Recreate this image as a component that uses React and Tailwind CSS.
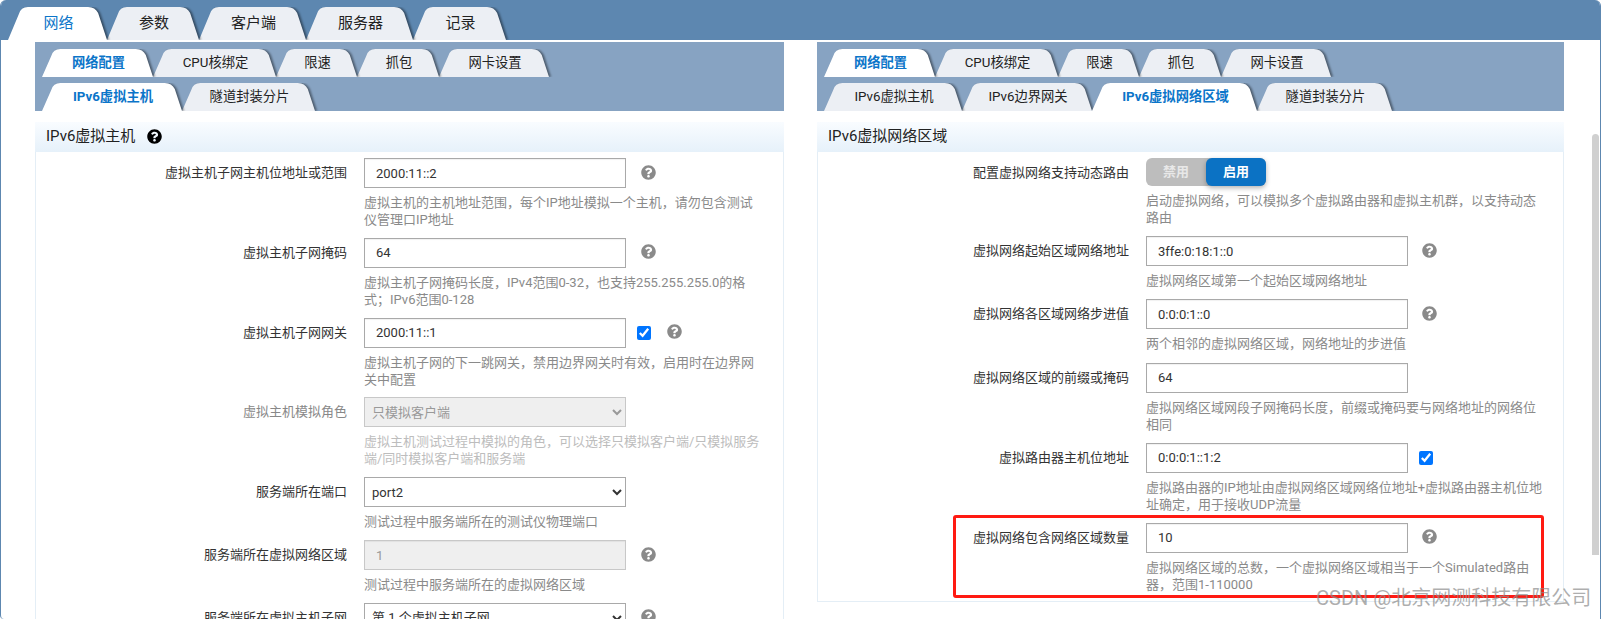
import React from "react";
import { FaQuestionCircle } from "react-icons/fa";

const zOrder = ["z-[7]", "z-[6]", "z-[5]", "z-[4]", "z-[3]", "z-[2]"];

const mainTabs = [
  { text: "网络", w: 103, active: true },
  { text: "参数", w: 96 },
  { text: "客户端", w: 111 },
  { text: "服务器", w: 111 },
  { text: "记录", w: 97 },
];

const subTabs = [
  { text: "网络配置", w: 115, active: true },
  { text: "CPU核绑定", w: 127 },
  { text: "限速", w: 85 },
  { text: "抓包", w: 86 },
  { text: "网卡设置", w: 114 },
];

const leftTabs = [
  { text: "IPv6虚拟主机", w: 144, active: true },
  { text: "隧道封装分片", w: 137 },
];

const rightTabs = [
  { text: "IPv6虚拟主机", w: 142 },
  { text: "IPv6边界网关", w: 134 },
  { text: "IPv6虚拟网络区域", w: 169, active: true },
  { text: "隧道封装分片", w: 139 },
];

const Tab = ({ text, w, h, active, index, big }) => {
  const d = `M0 ${h} L${h * 0.33} 7 Q${h * 0.33 + 2} 0 ${h * 0.33 + 9} 0 L${w - h * 0.33 - 12} 0 Q${w - h * 0.33 - 5} 0 ${w - h * 0.33 - 2} 6 L${w - 4} ${h} Z`;
  return (
    <div
      className={`relative flex shrink-0 items-center justify-center -mr-[4px] ${active ? "z-10" : zOrder[index]}`}
      style={{ width: w, height: h }}
    >
      <svg width={w} height={h} className="absolute inset-0 overflow-visible drop-shadow-[2px_0_1px_rgba(0,0,0,0.45)]">
        <path d={d} fill={active ? "#ffffff" : "#eceff4"} />
      </svg>
      <span
        className={`relative pr-[2px] ${big ? "text-[15px]" : "text-[13.3px]"} ${active ? "text-[#0b75c9]" : "text-[#222]"} ${active && !big ? "font-bold" : ""}`}
      >
        {text}
      </span>
    </div>
  );
};

const TabRow = ({ tabs, h = 28, big }) => (
  <div className="flex overflow-hidden" style={{ height: h }}>
    {tabs.map((t, i) => (
      <Tab key={t.text} {...t} h={h} big={big} index={i} />
    ))}
  </div>
);

const Help = ({ className = "" }) => <FaQuestionCircle size={15} className={`relative -top-px shrink-0 text-[#8a8a8a] ${className}`} />;

const Field = ({ value, disabled }) => (
  <input
    readOnly
    value={value}
    disabled={disabled}
    className={`h-[30px] w-[262px] shrink-0 border pl-[11px] text-[13px] outline-none shadow-[inset_0_1px_1px_rgba(0,0,0,0.06)] ${
      disabled ? "border-[#c8c8c8] bg-[#efefef] text-[#999]" : "border-[#a9a9a9] bg-white text-[#333]"
    }`}
  />
);

const Picker = ({ value, disabled }) => (
  <select
    disabled={disabled}
    defaultValue={value}
    className={`h-[30px] w-[262px] shrink-0 border pl-[3px] text-[13px] outline-none ${
      disabled ? "border-[#c8c8c8] bg-[#efefef] text-[#999]" : "border-[#a9a9a9] bg-white text-[#333]"
    }`}
  >
    <option>{value}</option>
  </select>
);

const Check = () => <input type="checkbox" defaultChecked className="ml-[11px] h-[14px] w-[14px] shrink-0" />;

const Row = ({ label, dim, children, help, faded }) => (
  <div className="flex">
    <div className={`w-[311px] shrink-0 pt-[6px] text-right text-[13px] leading-[18px] ${dim ? "text-[#888]" : "text-[#333]"}`}>{label}</div>
    <div className="ml-[17px] min-w-0">
      <div className="flex items-center">{children}</div>
      <div className={`mt-[6px] w-[400px] text-[13px] leading-[17px] ${faded ? "text-[#bdbdbd]" : "text-[#8a8a8a]"}`}>{help}</div>
    </div>
  </div>
);

const Toggle = () => (
  <div className="flex h-[28px] w-[120px] rounded-md bg-[#bdbdbd] text-[13px] font-bold">
    <div className="flex w-[60px] items-center justify-center text-[#e8e8e8]">禁用</div>
    <div className="flex w-[60px] items-center justify-center rounded-md bg-[#0b72c4] text-white shadow-[0_2px_5px_rgba(0,0,0,0.3)]">启用</div>
  </div>
);

const Card = ({ title, icon, bodyClass, children }) => (
  <div className="mt-[11px] border-x border-b border-[#e4eef6]">
    <div className="-mx-px flex h-[30px] items-center bg-gradient-to-b from-[#f9fcff] to-[#e6f1fa] pb-[2px] pl-[11px] text-[15px] text-[#222]">
      {title}
      {icon && <FaQuestionCircle size={15} className="ml-[12px] text-black" />}
    </div>
    <div className={`flex flex-col pt-[6px] ${bodyClass}`}>{children}</div>
  </div>
);

export default function App() {
  return (
    <div className="relative h-[619px] w-full overflow-hidden rounded-t-md rounded-bl-[4px] border-x border-[#5d87b0] bg-white font-[Roboto,'Noto_Sans_CJK_SC',sans-serif]">
      <div className="h-[40px] bg-[#5d87b0] pt-[7px] pl-[7px]">
        <TabRow tabs={mainTabs} h={33} big />
      </div>

      <div className="mt-[2px] flex gap-[33px] pl-[34px]">
        <div className="w-[749px] shrink-0">
          <div className="flex h-[69px] flex-col gap-[6px] bg-[#87a3c2] pt-[7px] pl-[7px]">
            <TabRow tabs={subTabs} />
            <TabRow tabs={leftTabs} />
          </div>
          <Card title="IPv6虚拟主机" icon bodyClass="gap-[9.83px]">
            <Row label="虚拟主机子网主机位地址或范围" help="虚拟主机的主机地址范围，每个IP地址模拟一个主机，请勿包含测试仪管理口IP地址">
              <Field value="2000:11::2" />
              <Help className="ml-[15px]" />
            </Row>
            <Row label="虚拟主机子网掩码" help="虚拟主机子网掩码长度，IPv4范围0-32，也支持255.255.255.0的格式；IPv6范围0-128">
              <Field value="64" />
              <Help className="ml-[15px]" />
            </Row>
            <Row label="虚拟主机子网网关" help="虚拟主机子网的下一跳网关，禁用边界网关时有效，启用时在边界网关中配置">
              <Field value="2000:11::1" />
              <Check />
              <Help className="ml-[16px]" />
            </Row>
            <Row label="虚拟主机模拟角色" dim faded help="虚拟主机测试过程中模拟的角色，可以选择只模拟客户端/只模拟服务端/同时模拟客户端和服务端">
              <Picker value="只模拟客户端" disabled />
            </Row>
            <Row label="服务端所在端口" help="测试过程中服务端所在的测试仪物理端口">
              <Picker value="port2" />
            </Row>
            <Row label="服务端所在虚拟网络区域" help="测试过程中服务端所在的虚拟网络区域">
              <Field value="1" disabled />
              <Help className="ml-[15px]" />
            </Row>
            <Row label="服务端所在虚拟主机子网" help="">
              <Picker value="第 1 个虚拟主机子网" />
              <Help className="ml-[15px]" />
            </Row>
          </Card>
        </div>

        <div className="w-[747px] shrink-0">
          <div className="flex h-[69px] flex-col gap-[6px] bg-[#87a3c2] pt-[7px] pl-[7px]">
            <TabRow tabs={subTabs} />
            <TabRow tabs={rightTabs} />
          </div>
          <Card title="IPv6虚拟网络区域" bodyClass="gap-[10.2px] pb-[8px]">
            <Row label="配置虚拟网络支持动态路由" help="启动虚拟网络，可以模拟多个虚拟路由器和虚拟主机群，以支持动态路由">
              <Toggle />
            </Row>
            <Row label="虚拟网络起始区域网络地址" help="虚拟网络区域第一个起始区域网络地址">
              <Field value="3ffe:0:18:1::0" />
              <Help className="ml-[14px]" />
            </Row>
            <Row label="虚拟网络各区域网络步进值" help="两个相邻的虚拟网络区域，网络地址的步进值">
              <Field value="0:0:0:1::0" />
              <Help className="ml-[14px]" />
            </Row>
            <Row label="虚拟网络区域的前缀或掩码" help="虚拟网络区域网段子网掩码长度，前缀或掩码要与网络地址的网络位相同">
              <Field value="64" />
            </Row>
            <Row label="虚拟路由器主机位地址" help="虚拟路由器的IP地址由虚拟网络区域网络位地址+虚拟路由器主机位地址确定，用于接收UDP流量">
              <Field value="0:0:0:1::1:2" />
              <Check />
            </Row>
            <Row label="虚拟网络包含网络区域数量" help="虚拟网络区域的总数，一个虚拟网络区域相当于一个Simulated路由器，范围1-110000">
              <Field value="10" />
              <Help className="ml-[14px]" />
            </Row>
          </Card>
        </div>
      </div>

      {/* scrollbar thumb */}
      <div className="absolute top-[134px] right-[1px] h-[421px] w-[7px] rounded-t-[4px] bg-[#d0d0d0]" />
      {/* red highlight drawn over the last row */}
      <div className="absolute top-[515px] left-[952px] h-[83px] w-[591px] rounded-[3px] border-[3px] border-[#ff1a12]" />
      {/* watermark */}
      <div className="absolute top-[585px] left-[1315px] whitespace-nowrap text-[20px] leading-[26px] text-[#8a8a8a]/70">CSDN @北京网测科技有限公司</div>
    </div>
  );
}
